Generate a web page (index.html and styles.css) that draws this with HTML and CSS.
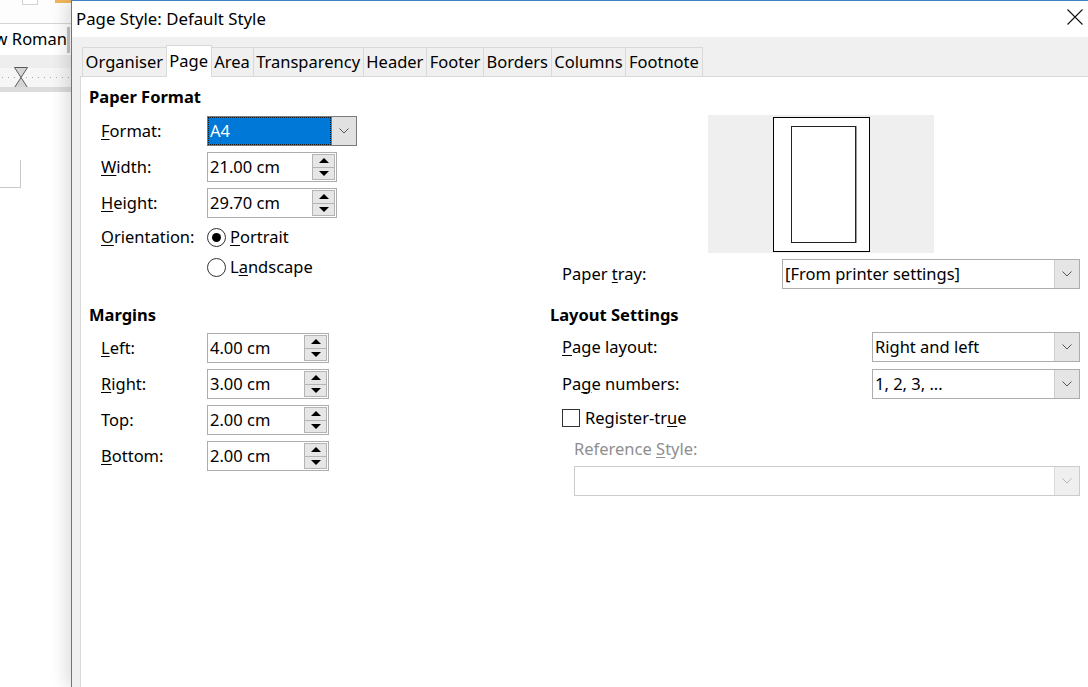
FILE: index.html
```html
<!DOCTYPE html>
<html lang="en">
<head>
<meta charset="utf-8">
<title>Page Style: Default Style</title>
<link rel="stylesheet" href="styles.css">
</head>
<body>
<div class="screen">
  <aside class="app">
    <div class="app-toolbar"><span class="tb-box"></span><span class="tb-orange"></span></div>
    <div class="app-fontrow"><div class="fontbox"><span class="fontname">Times New Roman</span></div></div>
    <div class="app-ruler-top"></div>
    <div class="app-ruler">
      <svg class="indent" width="14" height="21" viewBox="0 0 14 21"><polygon points="0.5,0.5 13.5,0.5 7,10.5" fill="#d4d4d4" stroke="#5a5a5a" stroke-width="1"/><polygon points="7,10.5 13.5,20.5 0.5,20.5" fill="#d4d4d4" stroke="#5a5a5a" stroke-width="1"/></svg>
    </div>
    <div class="app-ruler-bottom"></div>
    <div class="app-doc"><div class="page-corner"></div></div>
  </aside>

  <section class="dialog">
    <header class="titlebar">
      <span class="title">Page Style: Default Style</span>
      <svg class="close" width="16" height="16" viewBox="0 0 16 16"><path d="M0.5 0.5 L15.5 15.5 M15.5 0.5 L0.5 15.5" stroke="#111" stroke-width="1.1" fill="none"/></svg>
    </header>
    <div class="dialog-body">
      <nav class="tabs">
        <span class="tab">Organiser</span>
        <span class="tab active">Page</span>
        <span class="tab">Area</span>
        <span class="tab">Transparency</span>
        <span class="tab">Header</span>
        <span class="tab">Footer</span>
        <span class="tab">Borders</span>
        <span class="tab">Columns</span>
        <span class="tab">Footnote</span>
      </nav>
      <div class="panel">
        <div class="col col-left">
          <div class="heading">Paper Format</div>
          <div class="row row-format">
            <span class="label"><u>F</u>ormat:</span>
            <div class="combo combo-focus w-format">
              <span class="combo-text">A4</span>
              <span class="combo-btn"><svg width="10" height="6" viewBox="0 0 10 6"><path d="M0.5 0.5 L5 5 L9.5 0.5" stroke="#555" fill="none"/></svg></span>
            </div>
          </div>
          <div class="row">
            <span class="label"><u>W</u>idth:</span>
            <div class="spin w-size"><span class="spin-text">21.00 cm</span><span class="spin-btns"><span class="sb up"><i class="tri-up"></i></span><span class="sb down"><i class="tri-down"></i></span></span></div>
          </div>
          <div class="row">
            <span class="label"><u>H</u>eight:</span>
            <div class="spin w-size"><span class="spin-text">29.70 cm</span><span class="spin-btns"><span class="sb up"><i class="tri-up"></i></span><span class="sb down"><i class="tri-down"></i></span></span></div>
          </div>
          <div class="row row-orient">
            <span class="label"><u>O</u>rientation:</span>
            <span class="radio checked"></span><span class="opt"><u>P</u>ortrait</span>
          </div>
          <div class="row row-land">
            <span class="label"></span>
            <span class="radio"></span><span class="opt">L<u>a</u>ndscape</span>
          </div>

          <div class="heading heading-margins">Margins</div>
          <div class="row row-first-margin">
            <span class="label"><u>L</u>eft:</span>
            <div class="spin w-margin"><span class="spin-text">4.00 cm</span><span class="spin-btns"><span class="sb up"><i class="tri-up"></i></span><span class="sb down"><i class="tri-down"></i></span></span></div>
          </div>
          <div class="row">
            <span class="label"><u>R</u>ight:</span>
            <div class="spin w-margin"><span class="spin-text">3.00 cm</span><span class="spin-btns"><span class="sb up"><i class="tri-up"></i></span><span class="sb down"><i class="tri-down"></i></span></span></div>
          </div>
          <div class="row">
            <span class="label">Top:</span>
            <div class="spin w-margin"><span class="spin-text">2.00 cm</span><span class="spin-btns"><span class="sb up"><i class="tri-up"></i></span><span class="sb down"><i class="tri-down"></i></span></span></div>
          </div>
          <div class="row">
            <span class="label"><u>B</u>ottom:</span>
            <div class="spin w-margin"><span class="spin-text">2.00 cm</span><span class="spin-btns"><span class="sb up"><i class="tri-up"></i></span><span class="sb down"><i class="tri-down"></i></span></span></div>
          </div>
        </div>

        <div class="col col-right">
          <div class="preview">
            <div class="sheet"><div class="sheet-inner"></div></div>
          </div>
          <div class="rrow row-tray">
            <span class="rlabel lw-tray">Paper <u>t</u>ray:</span>
            <div class="combo w-tray">
              <span class="combo-text">[From printer settings]</span>
              <span class="combo-btn"><svg width="10" height="6" viewBox="0 0 10 6"><path d="M0.5 0.5 L5 5 L9.5 0.5" stroke="#555" fill="none"/></svg></span>
            </div>
          </div>
          <div class="heading heading-layout">Layout Settings</div>
          <div class="rrow row-first-layout">
            <span class="rlabel lw-layout"><u>P</u>age layout:</span>
            <div class="combo w-layout">
              <span class="combo-text">Right and left</span>
              <span class="combo-btn"><svg width="10" height="6" viewBox="0 0 10 6"><path d="M0.5 0.5 L5 5 L9.5 0.5" stroke="#555" fill="none"/></svg></span>
            </div>
          </div>
          <div class="rrow">
            <span class="rlabel lw-layout">Pa<u>g</u>e numbers:</span>
            <div class="combo w-layout">
              <span class="combo-text">1, 2, 3, ...</span>
              <span class="combo-btn"><svg width="10" height="6" viewBox="0 0 10 6"><path d="M0.5 0.5 L5 5 L9.5 0.5" stroke="#555" fill="none"/></svg></span>
            </div>
          </div>
          <div class="rrow row-check">
            <span class="checkbox"></span><span class="opt">Register-tr<u>u</u>e</span>
          </div>
          <div class="rrow row-refstyle">
            <span class="disabled-label">Reference <u>S</u>tyle:</span>
          </div>
          <div class="combo combo-disabled w-ref">
            <span class="combo-text"></span>
            <span class="combo-btn"><svg width="10" height="6" viewBox="0 0 10 6"><path d="M0.5 0.5 L5 5 L9.5 0.5" stroke="#b5b5b5" fill="none"/></svg></span>
          </div>
        </div>
      </div>
    </div>
  </section>
</div>
</body>
</html>
```

FILE: styles.css
```css
* { box-sizing: border-box; }

html, body {
  margin: 0;
  padding: 0;
}

body {
  width: 1088px;
  height: 687px;
  overflow: hidden;
  background: #ffffff;
  font-family: "Noto Sans", "Open Sans", "DejaVu Sans", sans-serif;
  font-size: 16.5px;
  color: #000;
}

u { text-decoration-thickness: 1px; text-underline-offset: 2px; }

.screen {
  display: flex;
  height: 687px;
}

/* ---------- background application ---------- */
.app {
  flex: 0 0 71px;
  width: 71px;
  display: flex;
  flex-direction: column;
  overflow: hidden;
  background: #fff;
}

.app-toolbar {
  height: 24px;
  flex: none;
  display: flex;
  align-items: flex-start;
  border-bottom: 1px solid #d6d6d6;
  background: #fdfdfd;
}

.tb-box {
  margin-left: 22px;
  width: 16px;
  height: 5px;
  border: 1px solid #d2d2d2;
  border-top: 0;
  background: #fff;
}

.tb-orange {
  margin-left: 17px;
  width: 16px;
  height: 3px;
  background: #f0b65a;
}

.app-fontrow {
  height: 31px;
  flex: none;
  display: flex;
  align-items: center;
  background: #fff;
}

.fontbox {
  width: 70px;
  height: 26px;
  display: flex;
  justify-content: flex-end;
  align-items: center;
  overflow: hidden;
  border-right: 3px solid #c4c4c4;
  padding-right: 0;
}

.fontname {
  white-space: nowrap;
  font-size: 16.5px;
  margin-bottom: 2px;
}

.app-ruler-top {
  height: 13px;
  flex: none;
  background: #eeeeee;
}

.app-ruler {
  height: 19px;
  flex: none;
  display: flex;
  align-items: flex-start;
  background-color: #f6f6f6;
  background-image: repeating-linear-gradient(to right, #a8a8a8 0 1px, transparent 1px 6px);
  background-size: 100% 1px;
  background-position: 2px 9px;
  background-repeat: no-repeat;
}

.indent {
  margin-left: 14px;
  margin-top: -1px;
  display: block;
}

.app-ruler-bottom {
  height: 5px;
  flex: none;
  background: #dcdcdc;
}

.app-doc {
  flex: 1;
  background: #fff;
}

.page-corner {
  width: 21px;
  height: 28px;
  margin-top: 68px;
  border-right: 1px solid #c8c8c8;
  border-bottom: 1px solid #c8c8c8;
}

/* ---------- dialog ---------- */
.dialog {
  flex: 0 0 1030px;
  width: 1030px;
  display: flex;
  flex-direction: column;
  border-left: 1px solid #3c80c6;
  border-top: 1px solid #3c80c6;
  background: #f0f0f0;
  box-shadow: -6px 0 14px rgba(0, 0, 0, 0.12);
}

.titlebar {
  height: 36px;
  flex: none;
  display: flex;
  align-items: center;
  justify-content: space-between;
  padding: 0 18px 0 4px;
  background: #fff;
}

.title {
  font-size: 16.8px;
  line-height: 20px;
}

.close { display: block; margin-top: -4px; }

.dialog-body {
  flex: 1;
  display: flex;
  flex-direction: column;
  padding: 8px 8px 0 8px;
}

.tabs {
  height: 31px;
  flex: none;
  display: flex;
  align-items: flex-end;
  margin-left: 2px;
  position: relative;
  z-index: 1;
}

.tab {
  height: 29px;
  padding: 0 2.7px 0 2.6px;
  line-height: 27px;
  border: 1px solid #d9d9d9;
  border-right: 0;
  border-bottom: 0;
  background: #f0f0f0;
  white-space: nowrap;
}

.tab:last-child { border-right: 1px solid #d9d9d9; }

.tab.active {
  height: 32px;
  margin-bottom: -1px;
  line-height: 29px;
  background: #fff;
  border-right: 1px solid #d9d9d9;
}

.tab.active + .tab { border-left: 0; }

.panel {
  flex: 1;
  display: grid;
  grid-template-columns: 461px 530px;
  align-content: start;
  align-items: start;
  padding: 10px 0 0 8px;
  background: #fff;
  border: 1px solid #d9d9d9;
  border-bottom: 0;
}

.col {
  display: flex;
  flex-direction: column;
}

.heading {
  font-weight: 700;
  line-height: 20px;
  height: 20px;
  white-space: nowrap;
}

.heading-margins { margin-top: 23px; }
.heading-layout { margin-top: 16px; }

.row {
  height: 30px;
  display: flex;
  align-items: center;
  padding-left: 12px;
  margin-top: 6px;
}

.row-format { margin-top: 9px; }
.row-orient { margin-top: 4px; }
.row-land { margin-top: 0; }
.row-first-margin { margin-top: 8px; }

.label {
  width: 106px;
  flex: none;
  white-space: nowrap;
  margin-bottom: 2px;
}

/* combobox */
.combo {
  height: 30px;
  display: flex;
  border: 1px solid #adadad;
  background: #fff;
}

.combo-text {
  flex: 1;
  padding-left: 2px;
  line-height: 27px;
  white-space: nowrap;
  overflow: hidden;
}

.combo-btn {
  width: 25px;
  flex: none;
  display: flex;
  align-items: center;
  justify-content: center;
  background: #e5e5e5;
  border-left: 1px solid #cfcfcf;
}

.combo-focus { border-color: #7a7a7a; }

.combo-focus .combo-text {
  background: #0078d7;
  color: #fff;
  border: 1px dotted #1a1a1a;
  padding-left: 1px;
  line-height: 25px;
}

.combo-focus .combo-btn {
  background: #e1e1e1;
  border-left: 1px solid #7a7a7a;
}

.combo-disabled { border-color: #cccccc; }
.combo-disabled .combo-btn { background: #efefef; border-left-color: #dcdcdc; }

.w-format { width: 150px; }
.w-tray { width: 298px; }
.w-layout { width: 208px; }
.w-ref { width: 506px; margin-left: 24px; margin-top: 2px; }

/* spin field */
.spin {
  height: 30px;
  display: flex;
  align-items: center;
  border: 1px solid #adadad;
  background: #fff;
  padding-right: 1px;
}

.spin-text {
  flex: 1;
  padding-left: 2px;
  white-space: nowrap;
  margin-bottom: 2px;
}

.spin-btns {
  width: 23px;
  height: 26px;
  flex: none;
  display: flex;
  flex-direction: column;
  border: 1px solid #b4b4b4;
  background: #e6e6e6;
}

.sb {
  flex: 1;
  display: flex;
  align-items: center;
  justify-content: center;
}

.sb.up { border-bottom: 1px solid #b4b4b4; }

.tri-up {
  width: 0;
  height: 0;
  border-left: 5px solid transparent;
  border-right: 5px solid transparent;
  border-bottom: 5px solid #000;
}

.tri-down {
  width: 0;
  height: 0;
  border-left: 5px solid transparent;
  border-right: 5px solid transparent;
  border-top: 5px solid #000;
}

.w-size { width: 130px; }
.w-margin { width: 122px; }

/* radio & checkbox */
.radio {
  width: 19px;
  height: 19px;
  flex: none;
  border: 1px solid #333;
  border-radius: 50%;
  background: #fff;
  display: flex;
  align-items: center;
  justify-content: center;
  margin-right: 4px;
}

.radio.checked::after {
  content: "";
  width: 9px;
  height: 9px;
  border-radius: 50%;
  background: #000;
}

.checkbox {
  width: 18px;
  height: 18px;
  flex: none;
  border: 1px solid #333;
  background: #fff;
  margin-right: 5px;
}

.opt { white-space: nowrap; margin-bottom: 2px; }

/* right column */
.preview {
  width: 226px;
  height: 138px;
  margin-top: 28px;
  margin-left: 158px;
  background: #efefef;
  display: flex;
  align-items: center;
  justify-content: center;
}

.sheet {
  width: 97px;
  height: 135px;
  background: #fff;
  border: 1px solid #000;
  padding: 8px 13px 8px 17px;
  display: flex;
}

.sheet-inner {
  flex: 1;
  border: 1px solid #222;
  box-shadow: 1px 0 0 #9a9a9a;
}

.rrow {
  height: 30px;
  display: flex;
  align-items: center;
  padding-left: 12px;
  margin-top: 7px;
}

.row-tray { margin-top: 6px; }
.row-first-layout { margin-top: 7px; }
.row-check { margin-top: 4px; }
.row-refstyle { margin-top: 1px; padding-left: 24px; }

.rlabel { flex: none; white-space: nowrap; margin-bottom: 2px; }
.lw-tray { width: 220px; }
.lw-layout { width: 310px; }

.disabled-label { color: #8f8f8f; white-space: nowrap; margin-bottom: 2px; }
```
